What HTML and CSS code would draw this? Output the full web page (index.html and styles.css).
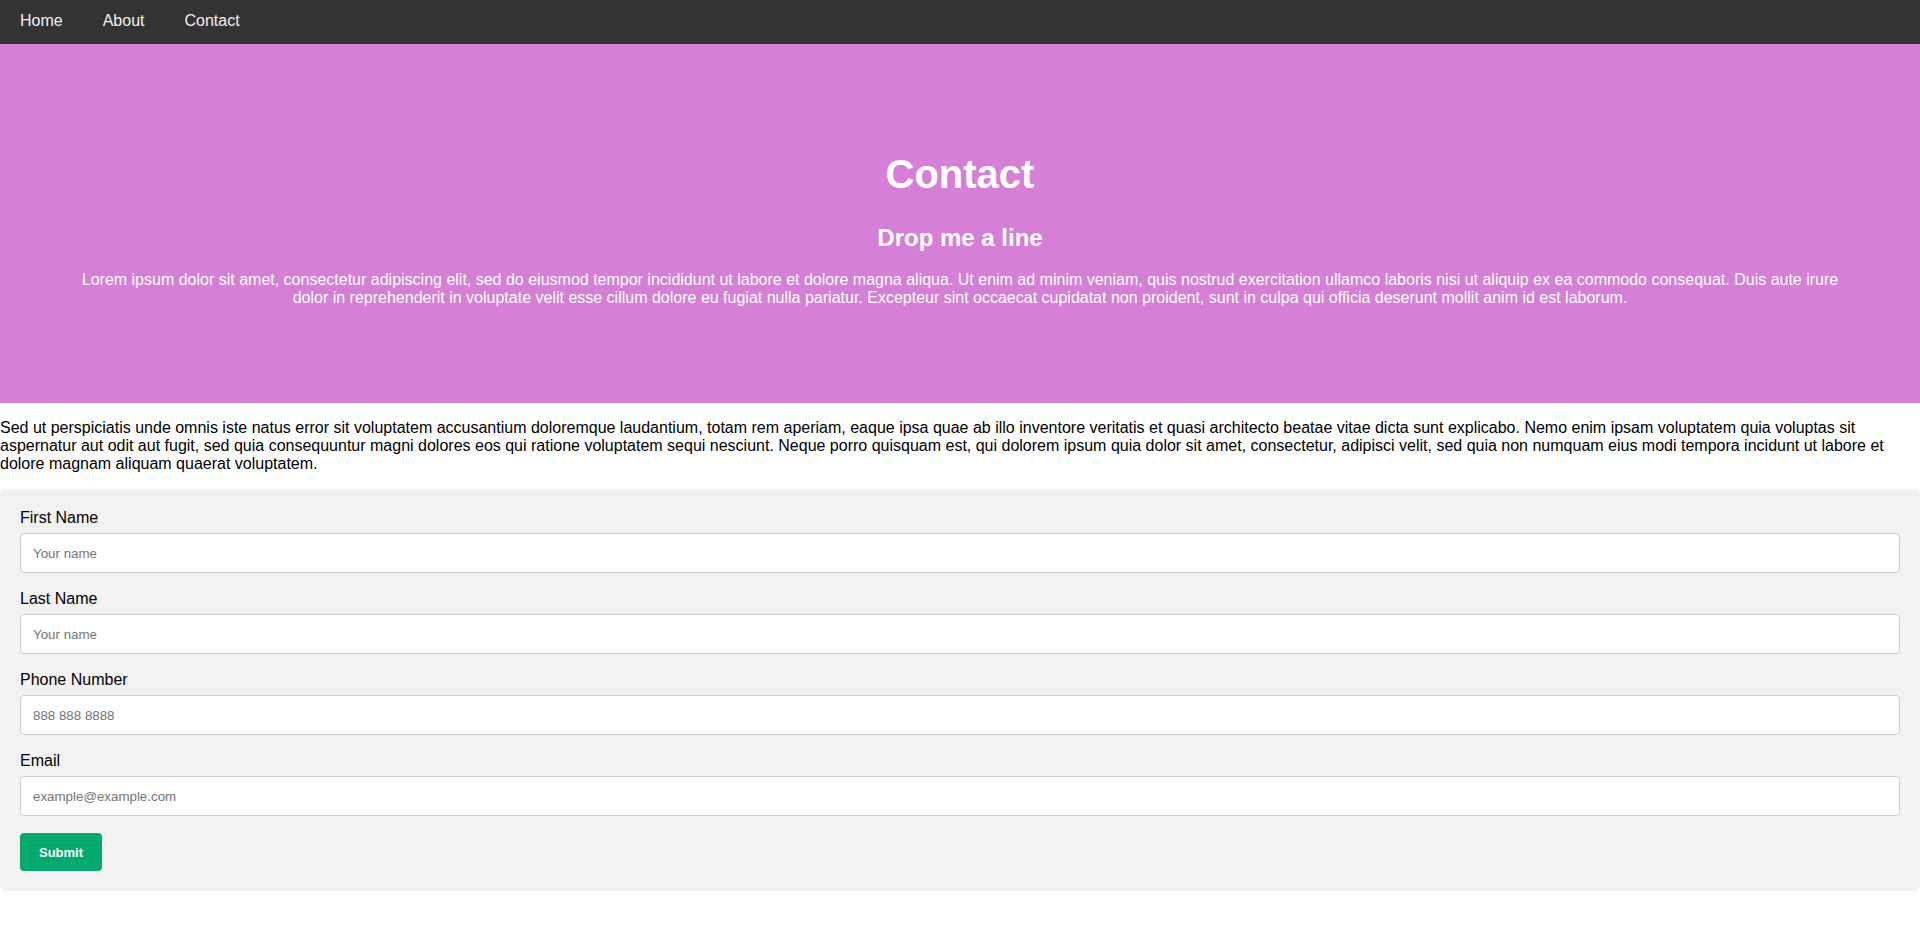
FILE: index.html
```html
<!DOCTYPE html>
<html lang="en">
<head>
<meta charset="utf-8">
<title>Contact</title>
<link rel="stylesheet" href="styles.css">
</head>
<body>
<nav class="topnav">
  <a href="#" class="nav-link">Home</a>
  <a href="#" class="nav-link">About</a>
  <a href="#" class="nav-link">Contact</a>
</nav>
<header class="hero">
  <h1 class="hero-title">Contact</h1>
  <h2 class="hero-subtitle">Drop me a line</h2>
  <p class="hero-text">Lorem ipsum dolor sit amet, consectetur adipiscing elit, sed do eiusmod tempor incididunt ut labore et dolore magna aliqua. Ut enim ad minim veniam, quis nostrud exercitation ullamco laboris nisi ut aliquip ex ea commodo consequat. Duis aute irure dolor in reprehenderit in voluptate velit esse cillum dolore eu fugiat nulla pariatur. Excepteur sint occaecat cupidatat non proident, sunt in culpa qui officia deserunt mollit anim id est laborum.</p>
</header>
<p class="intro">Sed ut perspiciatis unde omnis iste natus error sit voluptatem accusantium doloremque laudantium, totam rem aperiam, eaque ipsa quae ab illo inventore veritatis et quasi architecto beatae vitae dicta sunt explicabo. Nemo enim ipsam voluptatem quia voluptas sit aspernatur aut odit aut fugit, sed quia consequuntur magni dolores eos qui ratione voluptatem sequi nesciunt. Neque porro quisquam est, qui dolorem ipsum quia dolor sit amet, consectetur, adipisci velit, sed quia non numquam eius modi tempora incidunt ut labore et dolore magnam aliquam quaerat voluptatem.</p>
<form class="contact-form">
  <label class="field-label" for="fname">First Name</label>
  <input class="field-input" type="text" id="fname" placeholder="Your name">
  <label class="field-label" for="lname">Last Name</label>
  <input class="field-input" type="text" id="lname" placeholder="Your name">
  <label class="field-label" for="phone">Phone Number</label>
  <input class="field-input" type="tel" id="phone" placeholder="888 888 8888">
  <label class="field-label" for="email">Email</label>
  <input class="field-input" type="email" id="email" placeholder="example@example.com">
  <button class="submit-btn" type="submit">Submit</button>
</form>
</body>
</html>
```

FILE: styles.css
```css
html, body {
  margin: 0;
  padding: 0;
}

body {
  font-family: "Liberation Sans", Arial, sans-serif;
  font-size: 16px;
  line-height: 18px;
  color: #000;
  background: #fff;
}

.topnav {
  display: flex;
  background: #333;
  height: 44px;
}

.nav-link {
  display: block;
  padding: 12px 20px 14px;
  color: #f2f2f2;
  text-decoration: none;
  font-size: 16px;
  line-height: 18px;
}

.hero {
  background: #d580d6;
  color: #fff;
  text-align: center;
  padding: 80px;
}

.hero-title {
  font-size: 40px;
  line-height: 46px;
  font-weight: bold;
  margin: 0.67em 0;
}

.hero-subtitle {
  font-size: 24px;
  line-height: 27.6px;
  font-weight: bold;
  margin: 0.83em 0;
}

.hero-text {
  margin: 16px 0;
  line-height: 18px;
}

.intro {
  margin: 16px 0;
}

.contact-form {
  display: flex;
  flex-direction: column;
  align-items: stretch;
  background: #f2f2f2;
  border-radius: 5px;
  padding: 20px;
}

.field-label {
  display: block;
  line-height: 18px;
  margin-bottom: 6px;
}

.field-input {
  box-sizing: border-box;
  height: 40px;
  padding: 0 12px;
  margin: 0 0 17px;
  border: 1px solid #ccc;
  border-radius: 4px;
  background: #fff;
  font-family: "Liberation Sans", Arial, sans-serif;
  font-size: 13.333px;
  color: #000;
}

.field-input::placeholder {
  color: #757575;
}

.submit-btn {
  align-self: flex-start;
  box-sizing: border-box;
  height: 38px;
  padding: 0 19px;
  border: none;
  border-radius: 4px;
  background: #04aa6d;
  color: #fff;
  font-family: "Liberation Sans", Arial, sans-serif;
  font-size: 13px;
  font-weight: bold;
  cursor: pointer;
}
```
